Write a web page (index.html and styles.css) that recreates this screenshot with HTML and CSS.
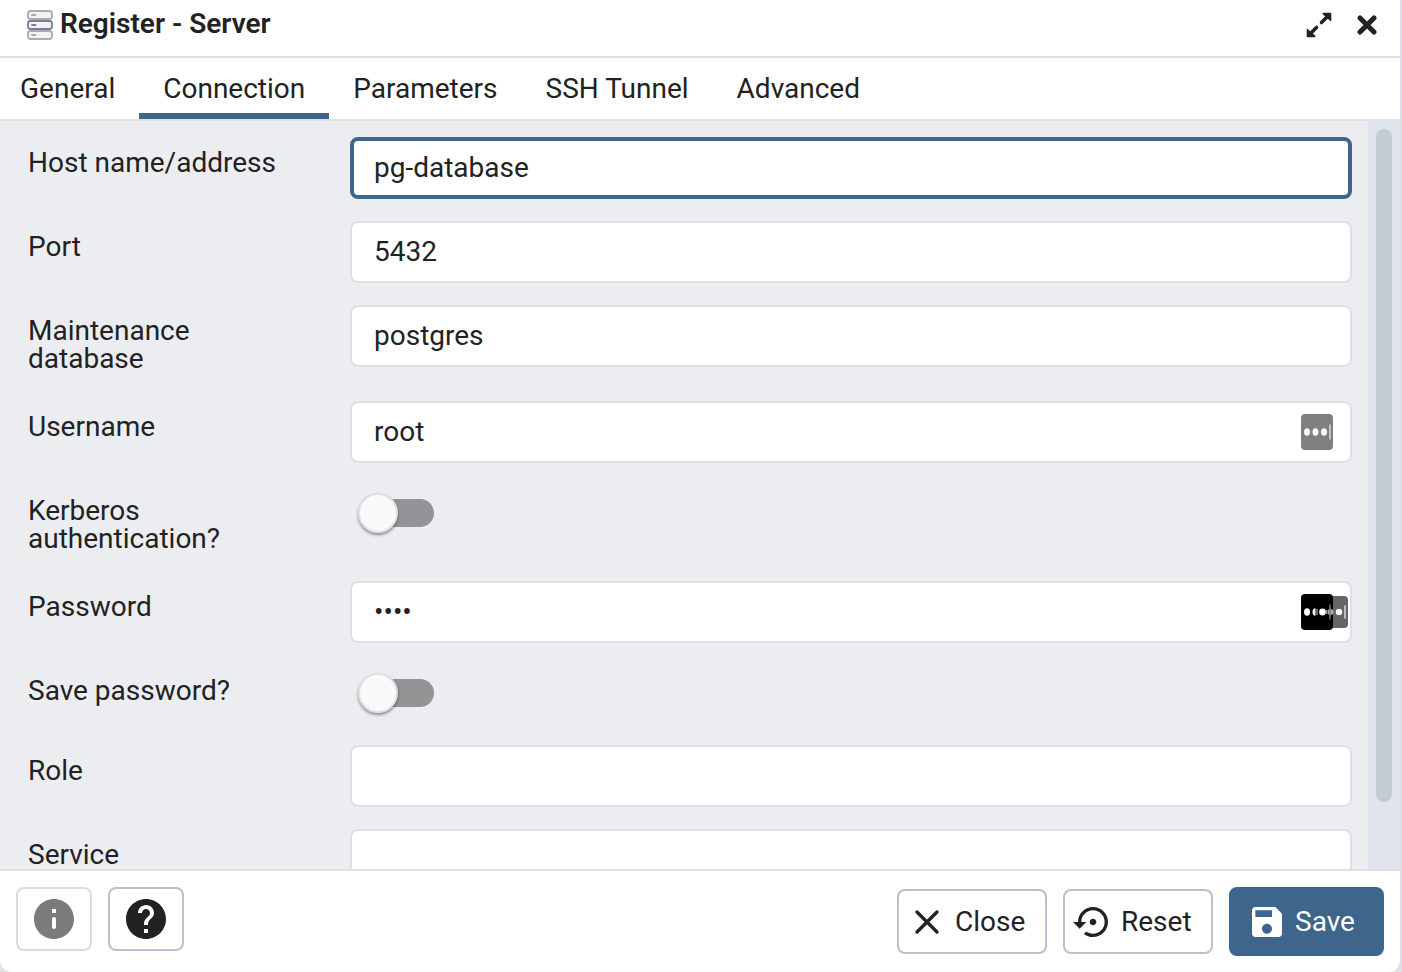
FILE: index.html
```html
<!DOCTYPE html>
<html lang="en">
<head>
<meta charset="utf-8">
<title>Register - Server</title>
<link rel="stylesheet" href="styles.css">
</head>
<body>
<main class="dialog">
  <header class="dialog-header">
    <svg class="server-icon" viewBox="0 0 28 30" aria-hidden="true">
      <g fill="#f2f2f2" stroke="#ababab" stroke-width="1.8">
        <rect x="2" y="1" width="24" height="8" rx="2.5"/>
        <rect x="2" y="21" width="24" height="8" rx="2.5"/>
        <rect x="2" y="11" width="24" height="8" rx="2.5" stroke="#7b7ba0"/>
      </g>
      <path d="M6 5h3.500M6 25h3.500" stroke="#ababab" stroke-width="1.8" stroke-linecap="round"/>
      <path d="M6 15h3.500" stroke="#7b7ba0" stroke-width="1.8" stroke-linecap="round"/>
    </svg>
    <h1 class="dialog-title">Register - Server</h1>
    <button class="icon-button" type="button" aria-label="Maximize">
      <svg class="expand-icon" viewBox="0 0 26 26" aria-hidden="true">
        <path d="M15.500 10.500L21 5M10.500 15.500L5 21" stroke="currentColor" stroke-width="3.600" stroke-linecap="round"/>
        <path d="M17.500.800H24.500Q25.300.800 25.300 1.600V8.500Q25.300 9.800 24.300 9L16.700 2.200Q15.900 1 17.500.800ZM8.500 25.200H1.500Q.700 25.200.700 24.400V17.500Q.700 16.200 1.700 17L9.300 23.800Q10.100 25 8.500 25.200Z" fill="currentColor"/>
      </svg>
    </button>
    <button class="icon-button" type="button" aria-label="Close dialog">
      <svg class="cross-icon" viewBox="0 0 20 20" aria-hidden="true"><path d="M3 3l14 14M17 3L3 17" stroke="currentColor" stroke-width="5" stroke-linecap="round"/></svg>
    </button>
  </header>

  <nav class="tabs" role="tablist">
    <button class="tab" type="button" role="tab">General</button>
    <button class="tab tab-active" type="button" role="tab" aria-selected="true">Connection</button>
    <button class="tab" type="button" role="tab">Parameters</button>
    <button class="tab" type="button" role="tab">SSH Tunnel</button>
    <button class="tab" type="button" role="tab">Advanced</button>
  </nav>

  <div class="panel">
    <form class="fields">
      <div class="field">
        <label class="label" for="host">Host name/address</label>
        <input class="text-input text-input-focused" id="host" type="text" value="pg-database">
      </div>
      <div class="field">
        <label class="label" for="port">Port</label>
        <input class="text-input" id="port" type="text" value="5432">
      </div>
      <div class="field">
        <label class="label" for="db">Maintenance database</label>
        <input class="text-input" id="db" type="text" value="postgres">
      </div>
      <div class="field">
        <label class="label" for="user">Username</label>
        <div class="input-wrap">
          <input class="text-input" id="user" type="text" value="root">
          <svg class="manager-icon" viewBox="0 0 48 36" aria-hidden="true">
            <rect width="32" height="36" rx="4" fill="#808080"/>
            <g fill="#fff"><ellipse cx="6" cy="18" rx="3" ry="3.800"/><ellipse cx="14.500" cy="18" rx="3" ry="3.800"/><ellipse cx="23" cy="18" rx="3" ry="3.800"/></g>
            <path d="M29 10.500v15" stroke="#d8d8d8" stroke-width="1.500"/>
          </svg>
        </div>
      </div>
      <div class="field">
        <label class="label" for="kerberos">Kerberos authentication?</label>
        <div class="switch-wrap"><input class="switch" id="kerberos" type="checkbox"></div>
      </div>
      <div class="field">
        <label class="label" for="password">Password</label>
        <div class="input-wrap">
          <input class="text-input" id="password" type="password" value="root">
          <svg class="manager-icon" viewBox="0 0 48 36" aria-hidden="true">
            <rect x="15" y="2" width="32" height="32" rx="4" fill="#666"/>
            <path d="M4 0H28Q32 0 32 4V32Q32 36 28 36H4Q0 36 0 32V4Q0 0 4 0Z" fill="#000"/>
            <ellipse cx="6" cy="18" rx="3" ry="3.800" fill="#fff"/>
            <path d="M14.500 14.200Q11.500 14.200 11.500 18T14.500 21.800Z" fill="#fff"/>
            <path d="M16 15v6" stroke="#888" stroke-width="1.500"/>
            <circle cx="21.500" cy="18" r="3.400" fill="#fff"/>
            <path d="M25.500 16v4" stroke="#999" stroke-width="1.500"/>
            <circle cx="29.500" cy="18" r="3" fill="#aaa"/>
            <path d="M29 10.500v15" stroke="#777" stroke-width="1.500"/>
            <circle cx="38" cy="18" r="3.200" fill="#fff"/>
            <path d="M44 11.500v13" stroke="#ddd" stroke-width="1.500"/>
          </svg>
        </div>
      </div>
      <div class="field">
        <label class="label" for="save-password">Save password?</label>
        <div class="switch-wrap"><input class="switch" id="save-password" type="checkbox"></div>
      </div>
      <div class="field">
        <label class="label" for="role">Role</label>
        <input class="text-input" id="role" type="text">
      </div>
      <div class="field">
        <label class="label" for="service">Service</label>
        <input class="text-input" id="service" type="text">
      </div>
    </form>
    <div class="scroll-track" aria-hidden="true"><div class="scroll-thumb"></div></div>
  </div>

  <footer class="dialog-footer">
    <button class="button button-square button-muted" type="button" aria-label="Information">
      <svg class="round-icon" viewBox="0 0 24 24" aria-hidden="true"><path fill="currentColor" d="M12 2C6.480 2 2 6.480 2 12s4.480 10 10 10 10-4.480 10-10S17.520 2 12 2zm0 15c-.55 0-1-.45-1-1v-4c0-.55.45-1 1-1s1 .45 1 1v4c0 .55-.45 1-1 1zm1-8h-2V7h2v2z"/></svg>
    </button>
    <button class="button button-square" type="button" aria-label="Help">
      <svg class="round-icon" viewBox="0 0 24 24" aria-hidden="true"><path fill="currentColor" d="M12 2C6.480 2 2 6.480 2 12s4.480 10 10 10 10-4.480 10-10S17.520 2 12 2zm1 17h-2v-2h2v2zm2.070-7.750-.9.920C13.450 12.900 13 13.500 13 15h-2v-.5c0-1.100.45-2.100 1.170-2.830l1.240-1.260c.37-.36.59-.86.59-1.410 0-1.100-.9-2-2-2s-2 .9-2 2H8c0-2.210 1.790-4 4-4s4 1.790 4 4c0 .88-.36 1.680-.93 2.250z"/></svg>
    </button>
    <div class="actions">
      <button class="button" type="button">
        <svg class="action-icon" viewBox="0 0 24 24" aria-hidden="true"><path d="M6 6l12 12M18 6L6 18" stroke="currentColor" stroke-width="2" stroke-linecap="round"/></svg>
        <span>Close</span>
      </button>
      <button class="button" type="button">
        <svg class="action-icon" viewBox="0 0 24 24" aria-hidden="true"><path fill="currentColor" d="M14 12c0-1.100-.9-2-2-2s-2 .9-2 2 .9 2 2 2 2-.9 2-2zm-2-9c-4.970 0-9 4.030-9 9H0l4 4 4-4H5c0-3.870 3.130-7 7-7s7 3.130 7 7-3.130 7-7 7c-1.510 0-2.910-.49-4.060-1.300l-1.420 1.440C8.040 20.300 9.940 21 12 21c4.970 0 9-4.030 9-9s-4.030-9-9-9z"/></svg>
        <span>Reset</span>
      </button>
      <button class="button button-primary" type="button">
        <svg class="action-icon" viewBox="0 0 24 24" aria-hidden="true"><path fill="currentColor" d="M17 3H5c-1.110 0-2 .9-2 2v14c0 1.100.89 2 2 2h14c1.100 0 2-.9 2-2V7l-4-4zm-5 16c-1.660 0-3-1.340-3-3s1.340-3 3-3 3 1.340 3 3-1.340 3-3 3zm3-10H5V5h10v4z"/></svg>
        <span>Save</span>
      </button>
    </div>
  </footer>
</main>
</body>
</html>
```

FILE: styles.css
```css
*,
*::before {
  box-sizing: border-box;
}

body {
  margin: 0;
  background: #dee0e7;
  color: #222;
  font-family: Roboto, "Liberation Sans", sans-serif;
  font-size: 28px;
  line-height: 28px;
}

button,
input {
  font: inherit;
  color: inherit;
}

svg {
  display: block;
  flex: none;
  fill: none;
}

.dialog {
  display: flex;
  flex-direction: column;
  height: 100vh;
  background: #fff;
  border-right: 2px solid #dddee5;
  border-radius: 0 0 12px 12px;
}

.dialog-header {
  display: flex;
  align-items: center;
  gap: 6px;
  height: 58px;
  padding: 0 12px 6px 26px;
  border-bottom: 2px solid #dee0e7;
}

.server-icon {
  width: 28px;
  height: 30px;
}

.dialog-title {
  flex: 1;
  margin: 0;
  padding-bottom: 2px;
  font-size: 28px;
  font-weight: 600;
}

.icon-button {
  display: flex;
  align-items: center;
  justify-content: center;
  width: 42px;
  height: 42px;
  padding: 0;
  border: 0;
  background: none;
}

.expand-icon {
  width: 26px;
  height: 26px;
}

.cross-icon {
  width: 20px;
  height: 20px;
}

.tabs {
  display: flex;
  height: 63px;
  border-bottom: 2px solid #dee0e7;
}

.tab {
  padding: 6px 24px 0;
  border: 0;
  border-bottom: 6px solid transparent;
  background: none;
}

.tab:first-child {
  padding-left: 20px;
}

.tab-active {
  border-bottom-color: #3e658c;
}

.panel {
  display: flex;
  flex: 1;
  min-height: 0;
  background: #ebedf1;
}

.fields {
  display: flex;
  flex: 1;
  flex-direction: column;
  gap: 22px;
  padding: 16px 16px 16px 28px;
  overflow-y: auto;
  scrollbar-width: none;
}

.field {
  display: grid;
  grid-template-columns: 322px 1fr;
  flex: none;
  align-items: start;
}

.label {
  padding: 12px 72px 6px 0;
}

.text-input {
  display: block;
  width: 100%;
  height: 62px;
  padding: 0 22px 2px;
  border: 2px solid #dee0e7;
  border-radius: 8px;
  outline: 0;
  background: #fff;
}

.text-input-focused {
  padding: 0 20px 2px;
  border: 4px solid #3e658c;
}

.input-wrap {
  position: relative;
}

.manager-icon {
  position: absolute;
  top: 13px;
  right: 3px;
  width: 48px;
  height: 36px;
}

.switch-wrap {
  display: flex;
  height: 58px;
  padding: 14px 8px;
}

.switch {
  position: relative;
  width: 76px;
  height: 28px;
  margin: 0;
  border-radius: 14px;
  appearance: none;
  background: linear-gradient(90deg, transparent 20px, #939495 20px);
}

.switch::before {
  content: "";
  position: absolute;
  top: -6px;
  left: 0;
  width: 40px;
  height: 40px;
  border: 2px solid #dee0e7;
  border-radius: 50%;
  background: #fafafa;
  box-shadow: 0 2px 3px rgba(0, 0, 0, 0.4);
}

.scroll-track {
  width: 32px;
  padding: 8px;
  background: #e0e4ed;
}

.scroll-thumb {
  height: 92%;
  border-radius: 8px;
  background: #c4cbd5;
}

.dialog-footer {
  display: flex;
  align-items: flex-start;
  gap: 16px;
  padding: 16px;
  border-top: 2px solid #dee0e7;
}

.actions {
  display: flex;
  align-items: center;
  gap: 16px;
  margin-left: auto;
}

.button {
  display: flex;
  align-items: center;
  gap: 8px;
  min-width: 150px;
  height: 65px;
  padding: 0 8px;
  border: 2px solid #bac0d0;
  border-radius: 8px;
  background: #fff;
}

.button-square {
  justify-content: center;
  min-width: 76px;
  height: 64px;
  padding: 0;
}

.button-muted {
  border-color: #d8dbe4;
  color: #7b7b7b;
}

.button-primary {
  min-width: 155px;
  height: 69px;
  padding: 0 16px;
  border-color: #3e658c;
  background: #3e658c;
  color: #fff;
}

.round-icon {
  width: 48px;
  height: 48px;
}

.action-icon {
  width: 40px;
  height: 40px;
}
```
